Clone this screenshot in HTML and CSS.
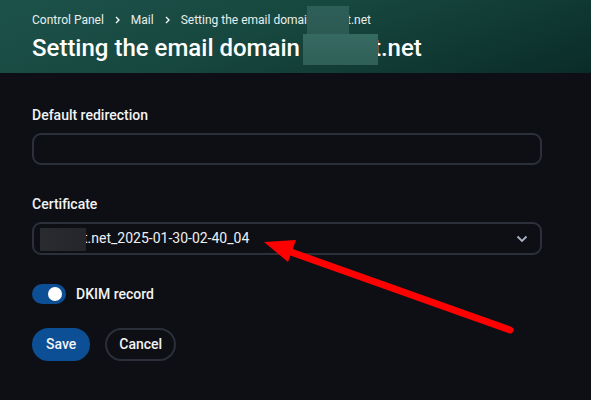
FILE: index.html
```html
<!DOCTYPE HTML>
<html>
<head>
<meta http-equiv="Content-Type" content="text/html; charset=utf-8">
<title>Setting the email domain</title>
<link rel="stylesheet" href="styles.css">
</head>

<body>
<!-- 页头 -->
<div class="page-hd">
    <div class="crumbs">
        <a href="javascript:;">Control Panel</a>
        <svg class="crumb-sep" width="5" height="8" viewBox="0 0 5 8"><path d="M1 1l3 3-3 3" fill="none" stroke="#fff" stroke-width="1.3"/></svg>
        <a href="javascript:;">Mail</a>
        <svg class="crumb-sep" width="5" height="8" viewBox="0 0 5 8"><path d="M1 1l3 3-3 3" fill="none" stroke="#fff" stroke-width="1.3"/></svg>
        <span>Setting the email domai<i class="mask mask-crumb"></i>t.net</span>
    </div>
    <h1 class="page-title">Setting the email domain <i class="mask mask-title"></i>t.net</h1>
</div>

<!-- 表单 -->
<div class="page-bd">
    <div class="field">
        <label class="field-label">Default redirection</label>
        <div class="field-box"></div>
    </div>
    <div class="field">
        <label class="field-label">Certificate</label>
        <div class="field-box field-select">
            <span class="field-val"><i class="mask mask-cert"></i>t.net_2025-01-30-02-40_04</span>
            <svg width="12" height="8" viewBox="0 0 12 8"><path d="M1.5 1.5l4.5 4.5 4.5-4.5" fill="none" stroke="#aab4c8" stroke-width="1.8"/></svg>
        </div>
    </div>
    <div class="switch-row">
        <span class="switch"><span class="switch-knob"></span></span>
        <span>DKIM record</span>
    </div>
    <div class="btns">
        <a href="javascript:;" class="btn btn-save">Save</a>
        <a href="javascript:;" class="btn btn-cancel">Cancel</a>
    </div>
</div>

<!-- 红色箭头标注 -->
<svg class="note-arrow" width="591" height="400" viewBox="0 0 591 400">
    <line x1="288" y1="251" x2="510" y2="330" stroke="#ff0000" stroke-width="7" stroke-linecap="round"/>
    <polygon points="264,242 296,240 288,262" fill="#ff0000"/>
</svg>
</body>
</html>
```

FILE: styles.css
```css
*{margin:0;padding:0;box-sizing:border-box;}
body{background:#0e0f14;color:#f2f3f5;font-family:Roboto,"Liberation Sans",sans-serif;width:591px;height:400px;overflow:hidden;position:relative;}
a{color:inherit;text-decoration:none;}
i{font-style:normal;}

.page-hd{height:73px;padding:12px 32px 0;background:linear-gradient(160deg,#1c524a 0%,#17473f 45%,#0a2c28 100%);overflow:hidden;}
.crumbs{display:flex;align-items:center;gap:11px;font-size:12px;line-height:16px;color:#e8efed;}
.page-title{margin-top:5px;font-size:24px;line-height:30px;font-weight:500;color:#fff;white-space:nowrap;}

/* 打码块盖在文字上 */
.mask{display:inline-block;vertical-align:middle;position:relative;z-index:1;}
.mask-crumb{width:42px;height:30px;margin:-14px -2px -14px 0;background:linear-gradient(180deg,#2d5e57,#2b5a53);}
.mask-title{width:75px;height:31px;margin:-4px -5px -4px -3px;background:linear-gradient(180deg,#356a62,#305f58);}
.mask-cert{width:46px;height:23px;margin:-4px -3px -4px -3px;background:linear-gradient(90deg,#2a2b31,#25262b);}

.page-bd{padding:33px 49px 0 32px;}
.field{margin-bottom:30px;}
.field-label{display:block;font-size:14px;font-weight:500;line-height:18px;margin-bottom:9px;}
.field-box{height:32px;border:2px solid #2b303b;border-radius:9px;}
.field-select{height:33px;display:flex;align-items:center;justify-content:space-between;padding:0 12px 0 9px;}
.field-val{font-size:14px;color:#eef0f3;}

.switch-row{display:flex;align-items:center;gap:10px;margin-top:-1px;font-size:14px;font-weight:500;}
.switch{width:34px;height:20px;border-radius:10px;background:#0c4f95;display:flex;align-items:center;justify-content:flex-end;padding-right:4px;}
.switch-knob{width:14px;height:14px;border-radius:50%;background:#fff;}

.btns{display:flex;gap:15px;margin-top:24px;}
.btn{height:33px;line-height:29px;padding:0 12px;border-radius:17px;font-size:14px;font-weight:500;border:2px solid transparent;}
.btn-save{background:#0c4f95;border-color:#0c4f95;}
.btn-cancel{border-color:#2a2f39;}

.note-arrow{position:absolute;left:0;top:0;pointer-events:none;}
```
